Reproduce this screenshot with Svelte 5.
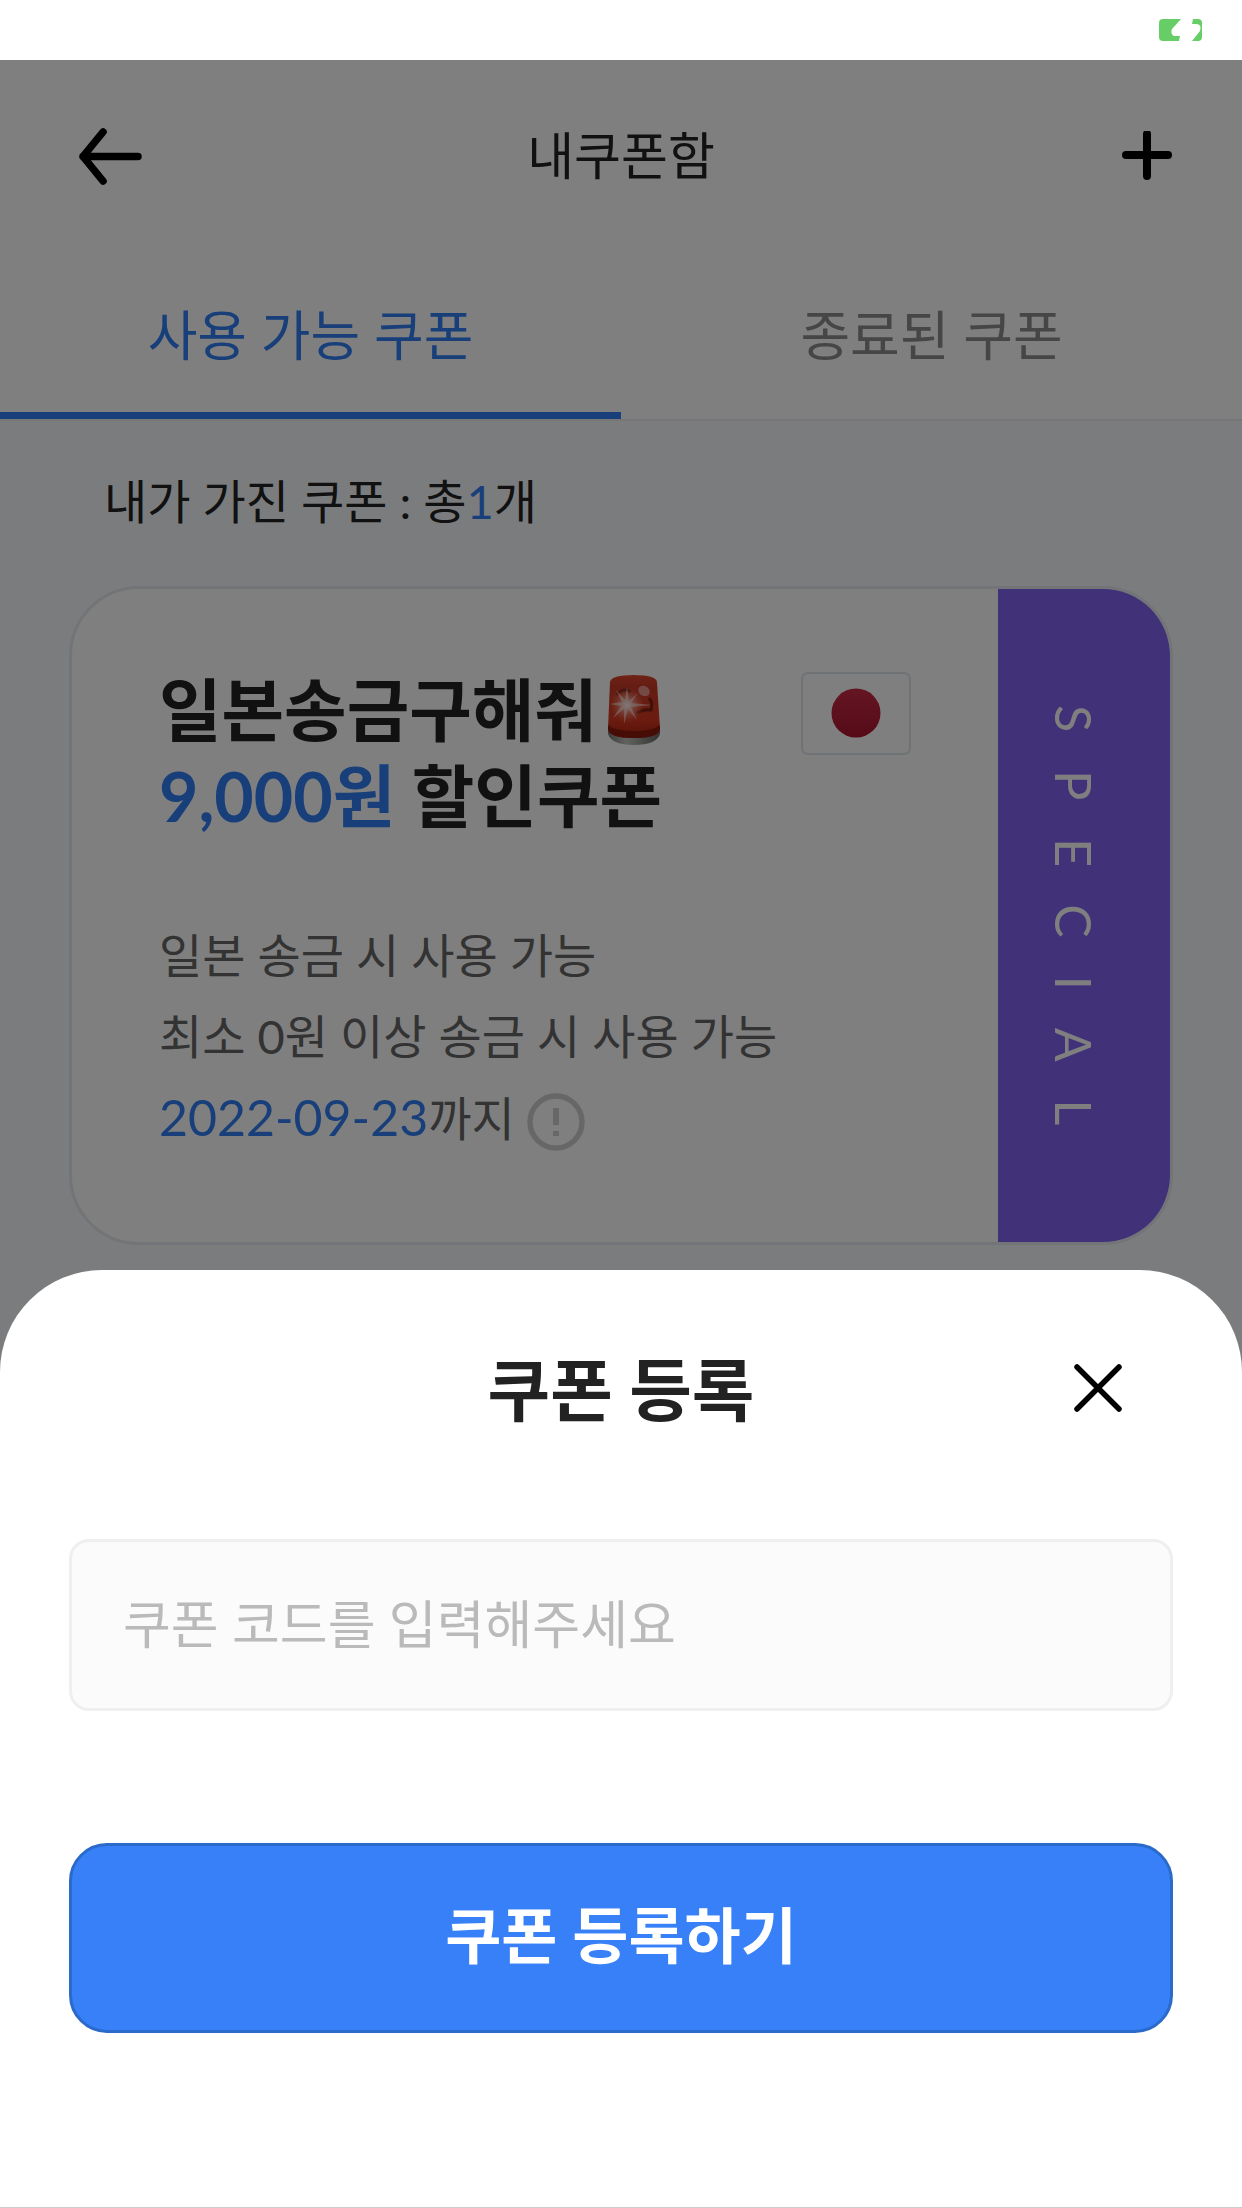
<script>
  let tab = $state('active');
  let code = $state('');

  const tabs = [
    { id: 'active', label: '사용 가능 쿠폰' },
    { id: 'ended', label: '종료된 쿠폰' }
  ];
</script>

<div class="screen">
  <div class="status">
    <svg class="battery" viewBox="0 0 44 22" aria-hidden="true">
      <path d="M4 0H22L13 10Q11 15 15 17H21L20 22H4Q0 22 0 18V4Q0 0 4 0Z" />
      <path d="M34 0H39Q43 0 43 4V18Q43 22 39 22H33L41 12Q43 6 38 5H33Z" />
    </svg>
  </div>

  <div class="page">
    <header class="topbar">
      <button class="icon-btn" aria-label="뒤로">
        <svg width="73" height="60" viewBox="-7 0 73 60">
          <path d="M26 6L6 30.5L26 55M6 30.5H61" fill="none" stroke="#000" stroke-width="7.5" stroke-linecap="round" stroke-linejoin="round" />
        </svg>
      </button>
      <h1>내쿠폰함</h1>
      <button class="icon-btn" aria-label="쿠폰 추가">
        <svg width="50" height="50" viewBox="0 0 50 50">
          <path d="M25 3V45M4 24H46" fill="none" stroke="#000" stroke-width="8" stroke-linecap="round" />
        </svg>
      </button>
    </header>

    <nav class="tabs">
      {#each tabs as t}
        <button class:on={tab === t.id} onclick={() => (tab = t.id)}>{t.label}</button>
      {/each}
    </nav>

    <main>
      <p class="count">내가 가진 쿠폰 : 총<b>1</b>개</p>

      <article class="coupon">
        <div class="body">
          <div class="head">
            <h2>
              <span class="line">일본송금구해줘<svg class="siren" viewBox="0 0 54 70" aria-hidden="true">
                  <defs>
                    <linearGradient id="dome" x1="0" y1="0" x2="0" y2="1">
                      <stop offset="0" stop-color="#e0452c" />
                      <stop offset="0.2" stop-color="#c93a26" />
                      <stop offset="0.7" stop-color="#d8381f" />
                      <stop offset="1" stop-color="#b02412" />
                    </linearGradient>
                    <linearGradient id="base">
                      <stop offset="0" stop-color="#777" />
                      <stop offset="0.35" stop-color="#c4c4c0" />
                      <stop offset="1" stop-color="#666" />
                    </linearGradient>
                    <radialGradient id="glow">
                      <stop offset="0" stop-color="#fff" />
                      <stop offset="0.3" stop-color="#f7b5a8" stop-opacity="0.8" />
                      <stop offset="1" stop-color="#e8604a" stop-opacity="0" />
                    </radialGradient>
                  </defs>
                  <path d="M1 54Q27 64 53 54V59Q49 70 27 70Q5 70 1 59Z" fill="url(#base)" />
                  <path d="M3 7Q4 0 27 0Q49 0 50 7L53 54Q52 63 27 63Q2 63 1 54Z" fill="url(#dome)" />
                  <path d="M1 50Q8 56 27 56Q46 56 53 50V54Q52 63 27 63Q2 63 1 54Z" fill="#8c1a0c" />
                  <path d="M10 20Q16 12 24 17M42 23Q46 27 44 35Q36 34 30 38" fill="none" stroke="#7a2014" stroke-width="3" />
                  <ellipse cx="37" cy="16" rx="6" ry="5" fill="#f0a8a4" opacity="0.8" transform="rotate(35 37 16)" />
                  <circle cx="20" cy="30" r="18" fill="url(#glow)" />
                  <path d="M20 12L22 26L31 18L24 28L45 30L24 32L30 45L21 34L17 49L17 34L6 43L14 31L3 29L15 27L9 15L18 25Z" fill="#ffe5e0" opacity="0.6" />
                </svg></span>
              <span class="line"><b>9,000원</b> 할인쿠폰</span>
            </h2>
            <svg class="flag" width="110" height="83" viewBox="0 0 110 83" role="img" aria-label="일본">
              <defs>
                <linearGradient id="sun" x1="0" y1="0" x2="0" y2="1">
                  <stop offset="0" stop-color="#ca2b46" />
                  <stop offset="1" stop-color="#ac1530" />
                </linearGradient>
              </defs>
              <rect x="1" y="1" width="108" height="81" rx="6" fill="#fff" stroke="#dfe6eb" stroke-width="2" />
              <circle cx="55" cy="41" r="24.5" fill="url(#sun)" />
            </svg>
          </div>
          <div class="desc">
            <p>일본 송금 시 사용 가능</p>
            <p>최소 0원 이상 송금 시 사용 가능</p>
            <p class="until">
              <span><b>2022-09-23</b>까지</span>
              <svg width="58" height="58" viewBox="0 0 58 58" aria-hidden="true">
                <circle cx="29" cy="29" r="26" fill="none" stroke="#cfcfcf" stroke-width="5.5" />
                <path d="M29 15V32M29 38V43" stroke="#cfcfcf" stroke-width="6" />
              </svg>
            </p>
          </div>
        </div>
        <div class="ribbon"><span>SPECIAL</span></div>
      </article>
    </main>
    <div class="dim"></div>
  </div>

  <section class="sheet" role="dialog" aria-labelledby="sheet-title">
    <div class="sheet-head">
      <h2 id="sheet-title">쿠폰 등록</h2>
      <button class="icon-btn" aria-label="닫기">
        <svg width="50" height="50" viewBox="0 0 50 50">
          <path d="M4 4L46 46M46 4L4 46" fill="none" stroke="#000" stroke-width="5.5" stroke-linecap="round" />
        </svg>
      </button>
    </div>
    <input type="text" aria-label="쿠폰 코드" placeholder="쿠폰 코드를 입력해주세요" bind:value={code} />
    <button class="submit">쿠폰 등록하기</button>
  </section>
</div>

<style>
  :global(body) {
    margin: 0;
    background: #fff;
  }

  .screen {
    position: relative;
    display: flex;
    flex-direction: column;
    min-height: 100vh;
    overflow: hidden;
    font-family: Lato, 'Noto Sans CJK KR', sans-serif;
    color: #222;
  }

  h1,
  h2,
  p {
    margin: 0;
  }

  button,
  input {
    font-family: inherit;
  }

  b {
    font-weight: inherit;
    color: #307ff4;
  }

  svg {
    display: block;
  }

  .status {
    display: flex;
    justify-content: flex-end;
    align-items: center;
    height: 60px;
    padding: 0 39px;
  }

  .battery {
    width: 44px;
    height: 22px;
    fill: #67ce67;
  }

  .page {
    position: relative;
    flex: 1;
    display: flex;
    flex-direction: column;
    background: #fff;
  }

  .dim {
    position: absolute;
    inset: 0;
    background: rgba(0, 0, 0, 0.5);
  }

  .icon-btn {
    display: flex;
    padding: 0;
    border: 0;
    background: none;
  }

  .topbar {
    display: grid;
    grid-template-columns: 1fr auto 1fr;
    align-items: center;
    height: 192px;
    padding: 0 70px;
  }

  .topbar .icon-btn:last-child {
    justify-self: end;
  }

  h1 {
    font-size: 51px;
    font-weight: 400;
    line-height: 72px;
  }

  .tabs {
    display: flex;
    height: 167px;
    border-bottom: 2px solid #ecedf0;
  }

  .tabs button {
    flex: 1;
    padding: 0;
    border: 0;
    border-bottom: 7px solid transparent;
    background: none;
    font-size: 54px;
    color: #8d8d8d;
  }

  .tabs .on {
    border-color: #307ff4;
    color: #307ff4;
  }

  main {
    flex: 1;
    padding: 44px 69px;
    background: #f6f8fb;
  }

  .count {
    padding: 0 35px;
    font-size: 47px;
    line-height: 72px;
  }

  .coupon {
    display: flex;
    margin-top: 49px;
    border: 3px solid #e6e8ee;
    border-radius: 70px;
    background: #fff;
    overflow: hidden;
  }

  .body {
    flex: 1;
    padding: 78px 87px 83px;
  }

  .head {
    display: flex;
    justify-content: space-between;
    align-items: flex-start;
  }

  .head h2 {
    font-size: 68px;
    font-weight: 700;
    line-height: 86px;
  }

  .line {
    display: flex;
    align-items: center;
    white-space: pre;
  }

  .siren {
    width: 54px;
    height: 70px;
    margin-left: 10px;
  }

  .flag {
    margin-top: 5px;
  }

  .desc {
    margin-top: 76px;
    font-size: 47px;
    line-height: 81px;
    color: #666;
  }

  .until {
    display: flex;
    align-items: center;
    gap: 12px;
  }

  .until b {
    font-size: 50px;
  }

  .until svg {
    margin-top: 8px;
  }

  .ribbon {
    display: flex;
    align-items: center;
    justify-content: center;
    box-sizing: border-box;
    width: 172px;
    padding: 38px 20px 0 0;
    background: #8062f0;
    color: #fff;
    font-size: 50px;
    writing-mode: vertical-rl;
  }

  .ribbon span {
    letter-spacing: 38px;
  }

  .sheet {
    position: absolute;
    left: 0;
    right: 0;
    bottom: 0;
    display: flex;
    flex-direction: column;
    padding: 70px 69px 174px;
    border-bottom: 1px solid #ccc;
    border-radius: 102px 102px 0 0;
    background: #fff;
  }

  .sheet-head {
    display: grid;
    grid-template-columns: 1fr auto 1fr;
    align-items: center;
    padding: 0 50px;
  }

  .sheet-head h2 {
    grid-column: 2;
    font-size: 68px;
    line-height: 100px;
  }

  .sheet-head .icon-btn {
    justify-self: end;
    padding-bottom: 5px;
  }

  input {
    height: 172px;
    margin-top: 99px;
    padding: 0 51px 2px;
    box-sizing: border-box;
    border: 3px solid #efefef;
    border-radius: 20px;
    background: #fbfbfb;
    font-size: 52px;
    color: #222;
  }

  input::placeholder {
    color: #bababa;
    opacity: 1;
  }

  .submit {
    height: 190px;
    margin-top: 132px;
    padding: 0 0 12px;
    border: 3px solid #2a6acb;
    border-radius: 38px;
    background: #3780f7;
    color: #fff;
    font-size: 61px;
    font-weight: 700;
  }
</style>
